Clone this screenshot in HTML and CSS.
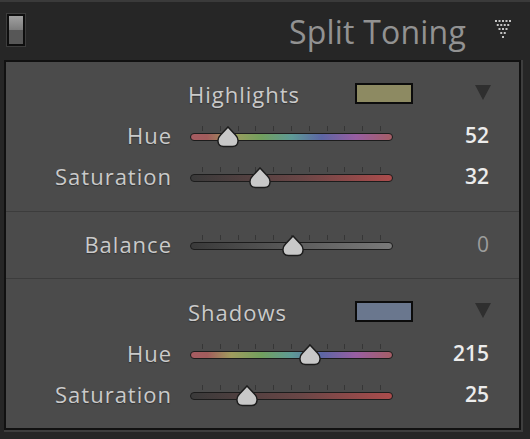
FILE: index.html
```html
<!DOCTYPE html>
<html lang="en">
<head>
    <meta charset="UTF-8">
    <meta name="viewport" content="width=device-width, initial-scale=1.0">
    <title>Split Toning</title>
    <link rel="stylesheet" href="styles.css">
</head>
<body>

    <!--EN-TETE DU PANNEAU-->
    <div class="topStrip"></div>
    <header class="head">
        <span class="switch"><span class="switchOn"></span><span class="switchOff"></span></span>
        <h1 class="title">Split Toning</h1>
        <svg class="dots" width="18" height="20" viewBox="0 0 18 20">
            <g fill="#c4c4c4">
                <rect x="1" y="1" width="2" height="2"/><rect x="4.5" y="1" width="2" height="2"/><rect x="8" y="1" width="2" height="2"/><rect x="11.5" y="1" width="2" height="2"/><rect x="15" y="1" width="2" height="2"/>
                <rect x="2.75" y="5" width="2" height="2"/><rect x="6.25" y="5" width="2" height="2"/><rect x="9.75" y="5" width="2" height="2"/><rect x="13.25" y="5" width="2" height="2"/>
                <rect x="4.5" y="9" width="2" height="2"/><rect x="8" y="9" width="2" height="2"/><rect x="11.5" y="9" width="2" height="2"/>
                <rect x="6.25" y="13" width="2" height="2"/><rect x="9.75" y="13" width="2" height="2"/>
                <rect x="8" y="17" width="2" height="2"/>
            </g>
        </svg>
    </header>
    <!--FIN EN-TETE-->

    <section class="panel">

        <!--HIGHLIGHTS-->
        <div class="group">
            <div class="groupHead">
                <span class="groupName">Highlights</span>
                <span class="swatch swatchHigh"></span>
                <span class="drop"></span>
            </div>
            <div class="row">
                <span class="label">Hue</span>
                <div class="slider">
                    <span class="ticks"></span>
                    <span class="track trackHue"></span>
                    <span class="rail"><svg class="thumb" style="left:14.4%" width="24" height="22" viewBox="0 0 24 22"><path d="M12 1 L19.5 9 Q22.5 12 22 15.5 Q21.5 20.5 16.5 20.5 L7.5 20.5 Q2.5 20.5 2 15.5 Q1.5 12 4.5 9 Z"/></svg></span>
                </div>
                <span class="value">52</span>
            </div>
            <div class="row">
                <span class="label">Saturation</span>
                <div class="slider">
                    <span class="ticks"></span>
                    <span class="track trackSat"></span>
                    <span class="rail"><svg class="thumb" style="left:32%" width="24" height="22" viewBox="0 0 24 22"><path d="M12 1 L19.5 9 Q22.5 12 22 15.5 Q21.5 20.5 16.5 20.5 L7.5 20.5 Q2.5 20.5 2 15.5 Q1.5 12 4.5 9 Z"/></svg></span>
                </div>
                <span class="value">32</span>
            </div>
        </div>

        <!--BALANCE-->
        <div class="group groupMid">
            <div class="row">
                <span class="label">Balance</span>
                <div class="slider">
                    <span class="ticks"></span>
                    <span class="track trackBal"></span>
                    <span class="rail"><svg class="thumb" style="left:50%" width="24" height="22" viewBox="0 0 24 22"><path d="M12 1 L19.5 9 Q22.5 12 22 15.5 Q21.5 20.5 16.5 20.5 L7.5 20.5 Q2.5 20.5 2 15.5 Q1.5 12 4.5 9 Z"/></svg></span>
                </div>
                <span class="value valueDim">0</span>
            </div>
        </div>

        <!--SHADOWS-->
        <div class="group groupLast">
            <div class="groupHead">
                <span class="groupName">Shadows</span>
                <span class="swatch swatchShadow"></span>
                <span class="drop"></span>
            </div>
            <div class="row">
                <span class="label">Hue</span>
                <div class="slider">
                    <span class="ticks"></span>
                    <span class="track trackHue"></span>
                    <span class="rail"><svg class="thumb" style="left:59.7%" width="24" height="22" viewBox="0 0 24 22"><path d="M12 1 L19.5 9 Q22.5 12 22 15.5 Q21.5 20.5 16.5 20.5 L7.5 20.5 Q2.5 20.5 2 15.5 Q1.5 12 4.5 9 Z"/></svg></span>
                </div>
                <span class="value">215</span>
            </div>
            <div class="row">
                <span class="label">Saturation</span>
                <div class="slider">
                    <span class="ticks"></span>
                    <span class="track trackSat"></span>
                    <span class="rail"><svg class="thumb" style="left:25%" width="24" height="22" viewBox="0 0 24 22"><path d="M12 1 L19.5 9 Q22.5 12 22 15.5 Q21.5 20.5 16.5 20.5 L7.5 20.5 Q2.5 20.5 2 15.5 Q1.5 12 4.5 9 Z"/></svg></span>
                </div>
                <span class="value">25</span>
            </div>
        </div>

    </section>
</body>
</html>
```

FILE: styles.css
```css
body{
    margin:0;
    background-color:#262626;
    font-family:"Open Sans", "Liberation Sans", sans-serif;
    width:530px;
    height:439px;
    overflow:hidden;
}

.topStrip{
    height:2px;
    background-color:#3a3a3a;
}

.head{
    display:flex;
    align-items:center;
    height:58px;
    padding:0 18px 0 7px;
}

.switch{
    display:flex;
    flex-direction:column;
    width:14px;
    height:28px;
    border:2px solid #0e0e0e;
    box-shadow:0 0 0 1px #3c3c3c;
    margin-top:-2px;
}

.switchOn{
    flex:1;
    background:linear-gradient(#a0a0a0, #7c7c7c);
}

.switchOff{
    flex:1;
    background-color:#575757;
}

.title{
    margin:0 28px 0 auto;
    font-size:32px;
    font-weight:normal;
    color:#929292;
    letter-spacing:0.2px;
}

.dots{
    display:block;
    margin-top:-4px;
}

.panel{
    margin-left:4px;
    width:513px;
    height:366px;
    border:2px solid #111;
    background-color:#4b4b4b;
    box-shadow:1px 1px 0 1px #3e3e3e;
}

.group{
    padding:12px 0 14px;
    border-bottom:1px solid #3c3c3c;
}

.groupMid{
    padding:12px 0 13px;
}

.groupLast{
    border-bottom:none;
    padding-top:13px;
}

.groupHead{
    display:flex;
    align-items:center;
    height:41px;
    padding-left:182px;
}

.groupName{
    width:167px;
    padding-bottom:2px;
    font-size:22px;
    letter-spacing:1px;
    color:#cacaca;
    text-shadow:0 1px 1px #333;
}

.swatch{
    width:54px;
    height:17px;
    border:2px solid #0c0c0c;
    margin-top:-2px;
}

.swatchHigh{
    background-color:#8d8a62;
}

.swatchShadow{
    background-color:#6a778e;
}

.drop{
    margin-left:62px;
    margin-top:-4px;
    width:0;
    height:0;
    border-left:8px solid transparent;
    border-right:8px solid transparent;
    border-top:15px solid #2f2f2f;
}

.row{
    display:grid;
    grid-template-columns:166px 203px 78px;
    column-gap:18px;
    align-items:center;
    height:41px;
}

.label{
    text-align:right;
    padding-bottom:2px;
    font-size:22px;
    letter-spacing:1px;
    color:#cacaca;
    text-shadow:0 1px 1px #333;
}

.value{
    text-align:right;
    padding-bottom:1px;
    font-size:21px;
    font-weight:600;
    color:#ececec;
}

.valueDim{
    font-weight:normal;
    color:#9c9c9c;
}

.slider{
    position:relative;
    height:26px;
}

.ticks{
    position:absolute;
    left:12px;
    top:3px;
    width:179px;
    height:5px;
    background:repeating-linear-gradient(to right, #363636 0 1px, transparent 1px 17.8px);
}

.track{
    position:absolute;
    left:0;
    right:0;
    top:10px;
    height:6px;
    border:1px solid #1c1c1c;
    border-radius:4px;
}

.trackHue{
    background:linear-gradient(to right, #a65c62 0%, #a25c5c 8%, #a09c5e 20%, #72a05e 35%, #5e9a96 50%, #5c66a4 65%, #985ea2 82%, #a65e66 100%);
}

.trackSat{
    background:linear-gradient(to right, #3a3a3a 0%, #6a4646 55%, #ac4c4c 100%);
}

.trackBal{
    background:linear-gradient(to right, #3a3a3a 0%, #5a5a5a 50%, #7a7a7a 100%);
}

/* zone ou le curseur peut aller */
.rail{
    position:absolute;
    left:12px;
    width:181px;
    top:0;
    height:26px;
}

.thumb{
    position:absolute;
    top:3px;
    transform:translateX(-50%);
}

.thumb path{
    fill:#c8c8c8;
    stroke:#1c1c1c;
    stroke-width:1.5;
}
```
